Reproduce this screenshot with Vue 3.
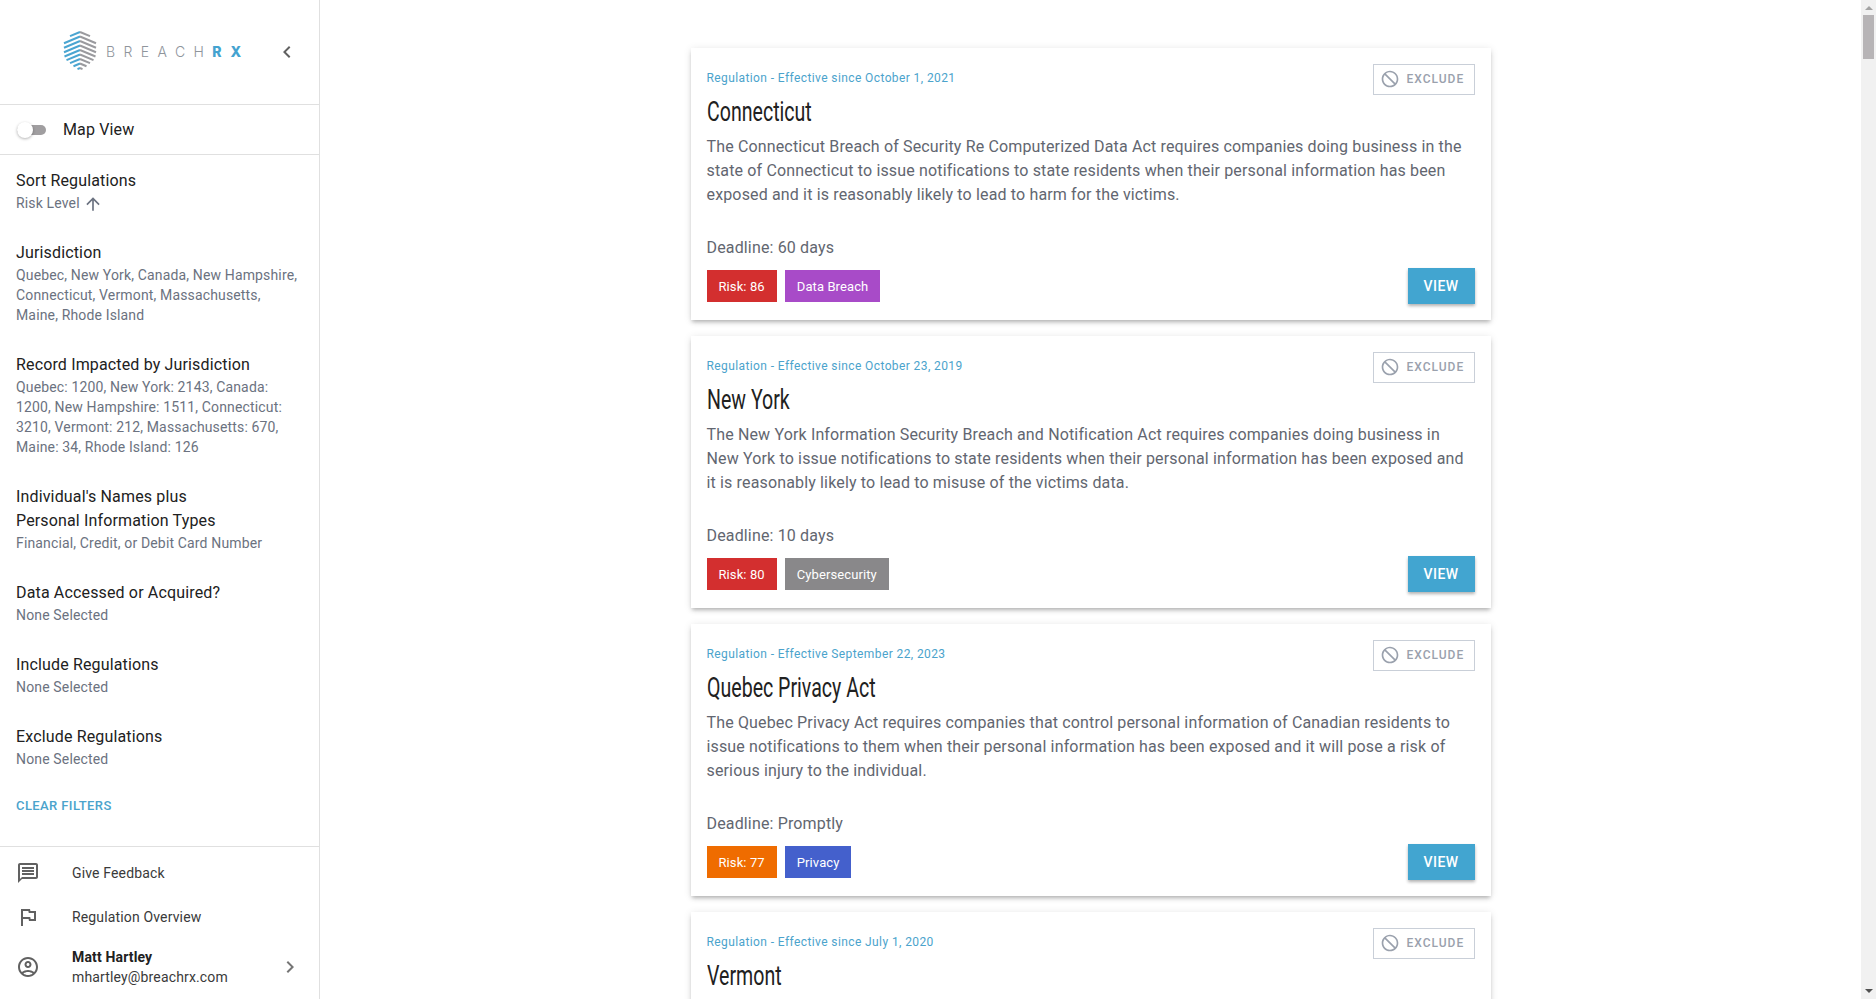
<script setup>
const filters = [
  { title: 'Jurisdiction', text: 'Quebec, New York, Canada, New Hampshire, Connecticut, Vermont, Massachusetts, Maine, Rhode Island' },
  { title: 'Record Impacted by Jurisdiction', text: 'Quebec: 1200, New York: 2143, Canada: 1200, New Hampshire: 1511, Connecticut: 3210, Vermont: 212, Massachusetts: 670, Maine: 34, Rhode Island: 126' },
  { title: "Individual's Names plus\nPersonal Information Types", text: 'Financial, Credit, or Debit Card Number' },
  { title: 'Data Accessed or Acquired?', text: 'None Selected' },
  { title: 'Include Regulations', text: 'None Selected' },
  { title: 'Exclude Regulations', text: 'None Selected' },
]

const cards = [
  {
    meta: 'Regulation - Effective since October 1, 2021',
    title: 'Connecticut',
    body: 'The Connecticut Breach of Security Re Computerized Data Act requires companies doing business in the state of Connecticut to issue notifications to state residents when their personal information has been exposed and it is reasonably likely to lead to harm for the victims.',
    deadline: '60 days',
    risk: 86,
    riskClass: 'red',
    tag: 'Data Breach',
    tagClass: 'purple',
  },
  {
    meta: 'Regulation - Effective since October 23, 2019',
    title: 'New York',
    body: 'The New York Information Security Breach and Notification Act requires companies doing business in New York to issue notifications to state residents when their personal information has been exposed and it is reasonably likely to lead to misuse of the victims data.',
    deadline: '10 days',
    risk: 80,
    riskClass: 'red',
    tag: 'Cybersecurity',
    tagClass: 'gray',
  },
  {
    meta: 'Regulation - Effective September 22, 2023',
    title: 'Quebec Privacy Act',
    body: 'The Quebec Privacy Act requires companies that control personal information of Canadian residents to issue notifications to them when their personal information has been exposed and it will pose a risk of serious injury to the individual.',
    deadline: 'Promptly',
    risk: 77,
    riskClass: 'orange',
    tag: 'Privacy',
    tagClass: 'blue',
  },
  {
    meta: 'Regulation - Effective since July 1, 2020',
    title: 'Vermont',
    body: 'The Vermont Security Breach Notice Act requires companies doing business in the state of Vermont to issue notifications to state residents when their personal information has been exposed.',
    deadline: '45 days',
    risk: 75,
    riskClass: 'orange',
    tag: 'Data Breach',
    tagClass: 'purple',
  },
]

// chevron rows of the shield: peak y and half width
const shieldRows = [
  [2, 10], [6.5, 16], [11, 16], [15.5, 16], [20, 15.5], [24.5, 13.5], [29, 10], [33.5, 6.5], [38, 2.5],
]
const leftLine = (r) => `M17 ${r[0]}L${17 - r[1]} ${r[0] + r[1] * 0.42}`
const rightLine = (r) => `M17 ${r[0]}L${17 + r[1]} ${r[0] + r[1] * 0.42}`
</script>

<template>
  <div class="app">
    <aside class="sidebar">
      <div class="brand">
        <svg class="shield" viewBox="0 0 34 44" width="34" height="44">
          <g fill="none" stroke-width="2">
            <path v-for="(r, i) in shieldRows" :key="'l' + i" :d="leftLine(r)" stroke="#4aa5d1" />
            <path v-for="(r, i) in shieldRows" :key="'r' + i" :d="rightLine(r)" stroke="#9a9a9e" />
          </g>
        </svg>
        <span class="brand-name">BREACH<b>RX</b></span>
        <svg class="collapse" viewBox="0 0 24 24" width="24" height="24">
          <path d="M15.41 7.41L14 6l-6 6 6 6 1.41-1.41L10.83 12z" />
        </svg>
      </div>

      <div class="map-row">
        <span class="toggle"><span class="toggle-thumb"></span></span>
        <span>Map View</span>
      </div>

      <div class="filters">
        <div class="filter">
          <div class="filter-title">Sort Regulations</div>
          <div class="filter-text">
            Risk Level
            <svg class="sort-arrow" viewBox="0 0 24 24" width="20" height="20">
              <path d="M4 12l1.41 1.41L11 7.83V20h2V7.83l5.58 5.59L20 12l-8-8-8 8z" />
            </svg>
          </div>
        </div>
        <div v-for="f in filters" :key="f.title" class="filter">
          <div class="filter-title">{{ f.title }}</div>
          <div class="filter-text">{{ f.text }}</div>
        </div>
        <div class="clear">CLEAR FILTERS</div>
      </div>

      <div class="foot">
        <div class="foot-row">
          <svg viewBox="0 0 24 24" width="24" height="24">
            <path d="M20 2H4c-1.1 0-2 .9-2 2v18l4-4h14c1.1 0 2-.9 2-2V4c0-1.1-.9-2-2-2zm0 14H6l-2 2V4h16v12z" />
            <path d="M6 12h12v2H6zm0-3h12v2H6zm0-3h12v2H6z" />
          </svg>
          <span>Give Feedback</span>
        </div>
        <div class="foot-row">
          <svg viewBox="0 0 24 24" width="24" height="24">
            <path d="M12.36 6l.4 2H18v6h-3.36l-.4-2H7V6h5.36M14 4H5v17h2v-7h5.6l.4 2h7V6h-5.6L14 4z" />
          </svg>
          <span>Regulation Overview</span>
        </div>
        <div class="foot-row user">
          <svg viewBox="0 0 24 24" width="24" height="24">
            <path d="M12 2C6.48 2 2 6.48 2 12s4.48 10 10 10 10-4.48 10-10S17.52 2 12 2zM7.35 18.5C8.66 17.56 10.26 17 12 17s3.34.56 4.65 1.5C15.34 19.44 13.74 20 12 20s-3.34-.56-4.65-1.5zm10.79-1.38C16.45 15.8 14.32 15 12 15s-4.45.8-6.14 2.12C4.7 15.73 4 13.95 4 12c0-4.42 3.58-8 8-8s8 3.58 8 8c0 1.95-.7 3.73-1.86 5.12z" />
            <path d="M12 6c-1.93 0-3.5 1.57-3.5 3.5S10.07 13 12 13s3.5-1.57 3.5-3.5S13.93 6 12 6zm0 5c-.83 0-1.5-.67-1.5-1.5S11.17 8 12 8s1.5.67 1.5 1.5S12.83 11 12 11z" />
          </svg>
          <div class="user-info">
            <strong>Matt Hartley</strong>
            <span>mhartley@breachrx.com</span>
          </div>
          <svg class="user-more" viewBox="0 0 24 24" width="24" height="24">
            <path d="M10 6L8.59 7.41 13.17 12l-4.58 4.59L10 18l6-6z" />
          </svg>
        </div>
      </div>
    </aside>

    <main class="main">
      <div class="list">
        <article v-for="c in cards" :key="c.title" class="card">
          <div class="card-top">
            <span class="meta">{{ c.meta }}</span>
            <span class="exclude">
              <svg viewBox="0 0 24 24" width="20" height="20">
                <path d="M12 2C6.48 2 2 6.48 2 12s4.48 10 10 10 10-4.48 10-10S17.52 2 12 2zm0 18c-4.42 0-8-3.58-8-8 0-1.85.63-3.55 1.69-4.9L16.9 18.31C15.55 19.37 13.85 20 12 20zm6.31-3.1L7.1 5.69C8.45 4.63 10.15 4 12 4c4.42 0 8 3.58 8 8 0 1.85-.63 3.55-1.69 4.9z" />
              </svg>
              EXCLUDE
            </span>
          </div>
          <h2 class="card-title"><span>{{ c.title }}</span></h2>
          <p class="card-body">{{ c.body }}</p>
          <div class="deadline">Deadline: {{ c.deadline }}</div>
          <div class="card-bottom">
            <span class="chip" :class="c.riskClass">Risk: {{ c.risk }}</span>
            <span class="chip" :class="c.tagClass">{{ c.tag }}</span>
            <button class="view">VIEW</button>
          </div>
        </article>
      </div>
    </main>

    <div class="scrollbar">
      <span class="arrow up"></span>
      <span class="thumb"></span>
      <span class="arrow down"></span>
    </div>
  </div>
</template>

<style scoped>
.app {
  display: flex;
  height: 100vh;
  overflow: hidden;
  background: #fff;
  font-family: Roboto, "Liberation Sans", sans-serif;
  color: #212121;
}

.sidebar {
  width: 320px;
  flex-shrink: 0;
  box-sizing: border-box;
  border-right: 1px solid #e0e0e0;
  display: flex;
  flex-direction: column;
  letter-spacing: 0.15px;
}

.brand {
  height: 105px;
  flex-shrink: 0;
  box-sizing: border-box;
  display: flex;
  align-items: center;
  padding-left: 63px;
  padding-bottom: 1px;
  border-bottom: 1px solid #e0e0e0;
}

.shield {
  margin-right: 9px;
  flex-shrink: 0;
}

.brand-name {
  font-family: Inter, "Open Sans", sans-serif;
  font-size: 14px;
  font-weight: 300;
  letter-spacing: 8.4px;
  color: #8f959c;
}

.brand-name b {
  font-weight: 800;
  color: #44a3d0;
  letter-spacing: 9px;
}

.collapse {
  margin-left: auto;
  margin-right: 20px;
  fill: #616161;
}

.map-row {
  height: 50px;
  flex-shrink: 0;
  box-sizing: border-box;
  display: flex;
  align-items: center;
  padding-left: 17px;
  gap: 17px;
  font-size: 16px;
  border-bottom: 1px solid #e0e0e0;
}

.toggle {
  position: relative;
  width: 29px;
  height: 10px;
  border-radius: 5px;
  background: #a09ea0;
}

.toggle-thumb {
  position: absolute;
  left: 0;
  top: -3px;
  width: 16px;
  height: 16px;
  border-radius: 50%;
  background: #fff;
  box-shadow: 0 1px 3px rgba(0, 0, 0, 0.3);
}

.filters {
  flex: 1;
  min-height: 0;
  padding: 14px 16px 0;
}

.filter {
  margin-bottom: 28px;
}

.filter-title {
  font-size: 16px;
  line-height: 24px;
  white-space: pre-line;
}

.filter-text {
  font-size: 14px;
  line-height: 20px;
  color: #6b7280;
}

.sort-arrow {
  vertical-align: -4px;
  margin: -2px 0;
  fill: #6b7280;
}

.clear {
  font-size: 13px;
  font-weight: 500;
  line-height: 20px;
  color: #4ba3cc;
  letter-spacing: 0.4px;
  margin-top: -1px;
}

.foot {
  height: 153px;
  flex-shrink: 0;
  box-sizing: border-box;
  border-top: 1px solid #e0e0e0;
  padding-top: 4px;
}

.foot-row {
  height: 44px;
  display: flex;
  align-items: center;
  padding: 0 16px;
  gap: 32px;
  font-size: 14px;
  color: #3a3a3a;
}

.foot-row svg {
  fill: #616161;
  flex-shrink: 0;
}

.foot-row.user {
  height: 56px;
}

.user-info {
  display: flex;
  flex-direction: column;
  line-height: 20px;
}

.user-info strong {
  font-weight: 700;
  color: #212121;
}

.foot-row .user-more {
  margin-left: auto;
  margin-right: 1px;
  fill: #757575;
}

.main {
  flex: 1;
  min-width: 0;
  overflow: hidden;
}

.list {
  display: flex;
  flex-direction: column;
  align-items: center;
  gap: 16px;
  padding-top: 48px;
}

.card {
  width: 800px;
  height: 272px;
  flex-shrink: 0;
  box-sizing: border-box;
  padding: 16px;
  background: #fff;
  box-shadow: 0 3px 4px -1px rgba(0, 0, 0, 0.25), 0 1px 8px rgba(0, 0, 0, 0.1);
}

.card-top {
  display: flex;
  align-items: center;
  justify-content: space-between;
  height: 31px;
}

.meta {
  font-size: 12px;
  letter-spacing: 0.4px;
  color: #4ba3cc;
  margin-bottom: 4px;
}

.exclude {
  display: flex;
  align-items: center;
  box-sizing: border-box;
  width: 102px;
  height: 31px;
  padding: 0 0 2px 6px;
  gap: 7px;
  border: 1px solid #c9cfd8;
  font-size: 12px;
  font-weight: 500;
  letter-spacing: 1px;
  color: #9aa1ad;
}

.exclude svg {
  fill: #9aa1ad;
}

.card-title {
  margin: 0 0 6px;
  font-size: 27px;
  font-weight: 400;
  line-height: 34px;
  color: #212121;
}

/* no condensed font on the box, so squeeze the heading */
.card-title span {
  display: inline-block;
  transform: scaleX(0.725);
  transform-origin: left center;
  white-space: nowrap;
}

.card-body {
  margin: 0 0 29px;
  font-size: 16px;
  line-height: 24px;
  letter-spacing: 0.15px;
  height: 72px;
  color: #626670;
}

.deadline {
  font-size: 16px;
  line-height: 24px;
  letter-spacing: 0.15px;
  color: #626670;
}

.card-bottom {
  display: flex;
  align-items: center;
  gap: 8px;
  height: 36px;
  margin-top: 8px;
}

.chip {
  height: 32px;
  padding: 0 12px;
  display: flex;
  align-items: center;
  font-size: 13px;
  letter-spacing: 0.1px;
  color: #fff;
}

.red { background: #d32f2f; }
.purple { background: #a84bc8; }
.gray { background: #89888a; }
.orange { background: #ef6c00; }
.blue { background: #4460cc; }

.view {
  margin-left: auto;
  width: 67px;
  height: 36px;
  border: 0;
  background: #42a5d0;
  color: #fff;
  font-family: inherit;
  font-size: 14px;
  font-weight: 500;
  letter-spacing: 0.4px;
  box-shadow: 0 2px 3px rgba(0, 0, 0, 0.3);
}

.scrollbar {
  width: 15px;
  flex-shrink: 0;
  background: #f1f1f1;
  display: flex;
  flex-direction: column;
  align-items: center;
}

.arrow {
  width: 0;
  height: 0;
  border-left: 4px solid transparent;
  border-right: 4px solid transparent;
}

.arrow.up {
  margin-top: 6px;
  border-bottom: 4px solid #a3a3a3;
}

.arrow.down {
  margin-top: auto;
  margin-bottom: 6px;
  border-top: 4px solid #505050;
}

.thumb {
  width: 11px;
  height: 44px;
  margin-top: 5px;
  background: #b7b4b6;
}
</style>
